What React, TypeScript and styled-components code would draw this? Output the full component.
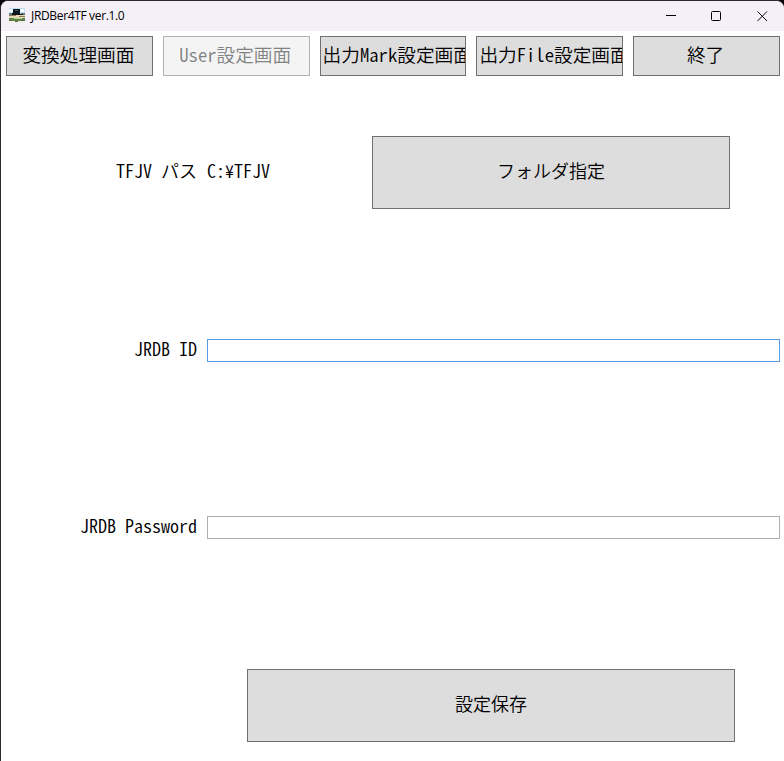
import React from "react";
import styled, { createGlobalStyle } from "styled-components";

const GlobalStyle = createGlobalStyle`
  * { box-sizing: border-box; }
  html, body { margin: 0; padding: 0; background: #000; overflow: hidden; }
  button, input { font: inherit; letter-spacing: inherit; font-feature-settings: inherit; }
`;

const Window = styled.div`
  width: 784px;
  height: 761px;
  overflow: hidden;
  background: #fff;
  border-left: 1px solid #2d2b2e;
  border-top: 1px solid #2d2b2e;
  border-radius: 8px 8px 0 0;
  font-family: "Noto Sans CJK JP", sans-serif;
  font-feature-settings: "hwid";
  font-weight: 350;
  font-size: 18px;
  color: #000;
`;

const TitleBar = styled.header`
  display: flex;
  align-items: center;
  height: 30px;
  padding-left: 8px;
  background: #f5eff7;
`;

const Title = styled.span`
  flex: 1;
  margin-left: 5px;
  font: 400 12px/16px "Open Sans", "Noto Sans", sans-serif;
  letter-spacing: -0.34px;
`;

const Caption = styled.button`
  display: flex;
  align-items: center;
  justify-content: center;
  width: 46px;
  height: 30px;
  padding: 0 0 0 2px;
  border: 0;
  background: transparent;
`;

const Nav = styled.nav`
  display: grid;
  grid-template-columns: repeat(5, 1fr);
  width: 784px;
  height: 53px;
`;

const Button = styled.button`
  display: flex;
  align-items: center;
  justify-content: center;
  padding: 0;
  overflow: hidden;
  white-space: nowrap;
  line-height: 24px;
  color: #000;
  background: #ddd;
  border: 1px solid #707070;
  &:disabled {
    color: #838383;
    background: #f4f4f4;
    border-color: #adb2b5;
  }
`;

const NavButton = styled(Button)<{ $clipped?: boolean }>`
  height: 40px;
  margin: 5px;
  font-size: 18.67px;
  padding: ${(p) => (p.$clipped ? "0 1px 4px 2px" : "0 2px 4px 0")};
  justify-content: ${(p) => (p.$clipped ? "flex-start" : "center")};
`;

const ActionButton = styled(Button)<{ $width: number; $left: number }>`
  width: ${(p) => p.$width}px;
  height: 73px;
  margin-left: ${(p) => p.$left}px;
  padding-bottom: 5px;
`;

const Row = styled.div<{ $height: number }>`
  display: flex;
  align-items: center;
  height: ${(p) => p.$height}px;
`;

const Label = styled.label`
  width: 196px;
  margin-right: 10px;
  padding-bottom: 5px;
  line-height: 24px;
  text-align: right;
  white-space: pre;
`;

const PathText = styled.span`
  width: 165px;
  padding-bottom: 5px;
  line-height: 24px;
`;

const Field = styled.input`
  width: 573px;
  height: 23px;
  padding: 0 2px;
  background: #fff;
  border: 1px solid #abadb3;
  border-radius: 0;
  outline: none;
`;

const ActiveField = styled(Field)`
  border-color: #569de5;
`;

const AppIcon = () => (
  <svg width="17" height="16" viewBox="0 0 17 16" shapeRendering="crispEdges">
    <path fill="#bfe0ee" d="M0 0h16v7H0z" />
    <path fill="#f4faff" d="M0 1h4v3H0zM11 1h4v3h-4z" />
    <path fill="#6c7b7b" d="M0 5h3v2H0zM12 5h4v2h-4z" />
    <path fill="#11151c" d="M4 1h7v4H4zM3 5h8v2H3zM11 6h3v1h-3z" />
    <path fill="#2b5f86" d="M6 2h3v1H6z" />
    <path fill="#e6dcb8" d="M0 7h16v3H0z" />
    <path fill="#8a7a58" d="M0 7h7v1H0zM10 8h6v1h-6z" />
    <path fill="#5d8745" d="M0 10h16v3H0z" />
    <path fill="#b7c98f" d="M5 10h8v1H5z" />
    <path fill="#f2f1ea" d="M0 13h16v2H0z" />
    <path fill="#59634e" d="M0 12h3v1H0zM6 13h3v1H6zM12 12h4v1h-4z" />
  </svg>
);

export default function App() {
  return (
    <>
      <GlobalStyle />
      <Window>
        <TitleBar>
          <AppIcon />
          <Title>JRDBer4TF ver.1.0</Title>
          <Caption aria-label="最小化">
            <svg width="11" height="11"><path d="M1 4.5h10" stroke="#000" /></svg>
          </Caption>
          <Caption aria-label="最大化">
            <svg width="11" height="11"><rect x=".5" y=".5" width="9" height="9" rx="1" fill="none" stroke="#000" /></svg>
          </Caption>
          <Caption aria-label="閉じる">
            <svg width="11" height="11"><path d="M.5.5l9.500 9.500M10 .5L.5 10" stroke="#000" /></svg>
          </Caption>
        </TitleBar>
        <Nav>
          <NavButton>変換処理画面</NavButton>
          <NavButton disabled>User設定画面</NavButton>
          <NavButton $clipped>出力Mark設定画面</NavButton>
          <NavButton $clipped>出力File設定画面</NavButton>
          <NavButton>終了</NavButton>
        </Nav>
        <Row $height={177}>
          <Label>TFJV パス</Label>
          <PathText>C:¥TFJV</PathText>
          <ActionButton $width={358} $left={0}>フォルダ指定</ActionButton>
        </Row>
        <Row $height={179}>
          <Label htmlFor="jrdb-id">JRDB ID</Label>
          <ActiveField id="jrdb-id" />
        </Row>
        <Row $height={175}>
          <Label htmlFor="jrdb-password">JRDB Password</Label>
          <Field id="jrdb-password" type="password" />
        </Row>
        <Row $height={181}>
          <ActionButton $width={488} $left={246}>設定保存</ActionButton>
        </Row>
      </Window>
    </>
  );
}
